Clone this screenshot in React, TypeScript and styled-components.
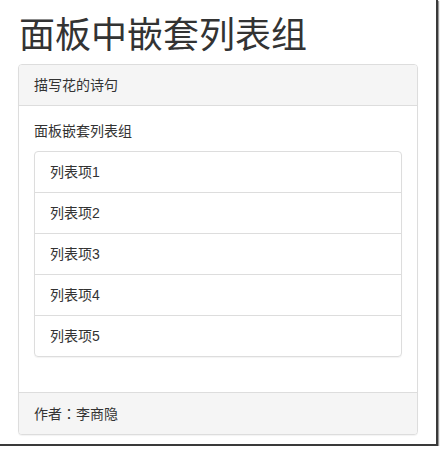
import styled, { createGlobalStyle } from "styled-components";

const GlobalStyle = createGlobalStyle`
  html, body {
    margin: 0;
    padding: 0;
    background: #ffffff;
  }

  body {
    font-family: "Helvetica Neue", "Liberation Sans", "Noto Sans CJK SC", sans-serif;
    font-size: 14px;
    line-height: 20px;
    color: #333333;
  }
`;

const Frame = styled.div`
  width: 400px;
  height: 432px;
  padding: 12px 18px 0;
  background: #ffffff;
  border-right: 2px solid #3a3a3a;
  border-bottom: 2px solid #3a3a3a;
  box-shadow: 1px 1px 1px #999999;
`;

const Title = styled.h1`
  margin: 0 0 12px 1px;
  font-size: 36px;
  line-height: 40px;
  font-weight: 400;
  color: #333333;
  font-family: "Noto Sans CJK SC", sans-serif;
`;

const Panel = styled.div`
  border: 1px solid #dddddd;
  border-radius: 4px;
  background: #ffffff;
  box-shadow: 0 1px 1px rgba(0, 0, 0, 0.05);
  overflow: hidden;
`;

const PanelHeading = styled.div`
  padding: 10px 15px;
  background: #f5f5f5;
  border-bottom: 1px solid #dddddd;
`;

const PanelFooter = styled.div`
  padding: 10px 15px;
  background: #f5f5f5;
  border-top: 1px solid #dddddd;
`;

const Colon = styled.span`
  font-family: "Noto Sans CJK JP", sans-serif;
`;

const PanelBody = styled.div`
  padding: 15px;
`;

const Lead = styled.p`
  margin: 0 0 10px;
`;

const ListGroup = styled.ul`
  list-style: none;
  margin: 0 0 20px;
  padding: 0;
  border-radius: 4px;
  box-shadow: 0 1px 1px rgba(0, 0, 0, 0.05);
`;

const ListItem = styled.li`
  padding: 10px 15px;
  border: 1px solid #dddddd;
  margin-bottom: -1px;

  &:first-child {
    border-top-left-radius: 4px;
    border-top-right-radius: 4px;
  }

  &:last-child {
    margin-bottom: 0;
    border-bottom-left-radius: 4px;
    border-bottom-right-radius: 4px;
  }
`;

const ITEMS = ["列表项1", "列表项2", "列表项3", "列表项4", "列表项5"];

const App = () => {
  return (
    <>
      <GlobalStyle />
      <Frame>
        <Title>面板中嵌套列表组</Title>
        <Panel>
          <PanelHeading>描写花的诗句</PanelHeading>
          <PanelBody>
            <Lead>面板嵌套列表组</Lead>
            <ListGroup>
              {ITEMS.map((item) => (
                <ListItem key={item}>{item}</ListItem>
              ))}
            </ListGroup>
          </PanelBody>
          <PanelFooter>
            作者<Colon>：</Colon>李商隐
          </PanelFooter>
        </Panel>
      </Frame>
    </>
  );
};

export default App;
